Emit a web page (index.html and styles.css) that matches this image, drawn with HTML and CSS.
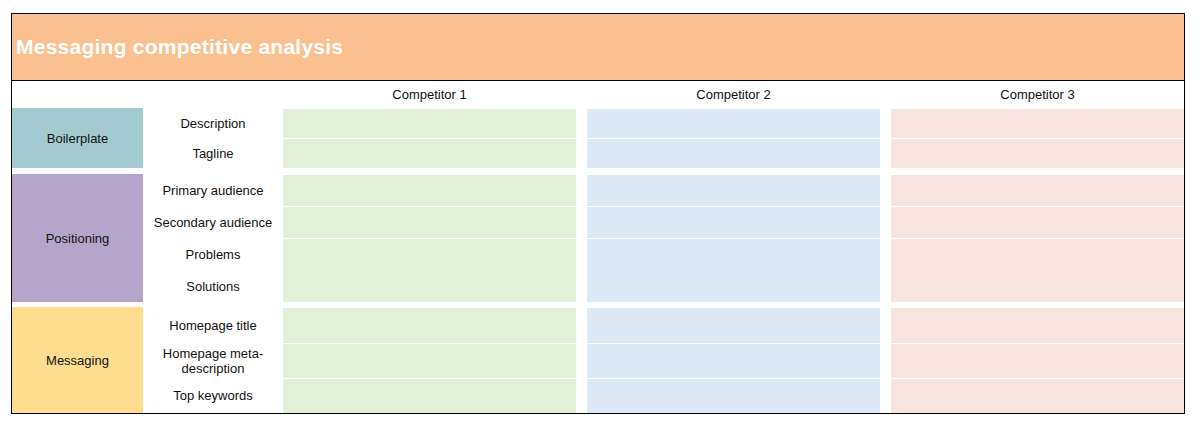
FILE: index.html
```html
<!DOCTYPE html>
<html lang="en">
<head>
<meta charset="utf-8">
<title>Messaging competitive analysis</title>
<link rel="stylesheet" href="styles.css">
</head>
<body>
<div class="sheet">
  <header class="title-bar">
    <h1 class="title">Messaging competitive analysis</h1>
  </header>

  <div class="row-grid col-heads">
    <div class="c1 head">Competitor 1</div>
    <div class="c2 head">Competitor 2</div>
    <div class="c3 head">Competitor 3</div>
  </div>

  <section class="row-grid group g-boiler">
    <div class="cat cat-boiler">Boilerplate</div>
    <div class="label">Description</div>
    <div class="c1 cell"></div><div class="c2 cell"></div><div class="c3 cell"></div>
    <div class="label">Tagline</div>
    <div class="c1 cell"></div><div class="c2 cell"></div><div class="c3 cell"></div>
  </section>

  <section class="row-grid group g-position">
    <div class="cat cat-position">Positioning</div>
    <div class="label">Primary audience</div>
    <div class="c1 cell"></div><div class="c2 cell"></div><div class="c3 cell"></div>
    <div class="label">Secondary audience</div>
    <div class="c1 cell"></div><div class="c2 cell"></div><div class="c3 cell"></div>
    <div class="label">Problems</div>
    <div class="c1 cell span2"></div><div class="c2 cell span2"></div><div class="c3 cell span2"></div>
    <div class="label">Solutions</div>
  </section>

  <section class="row-grid group g-message">
    <div class="cat cat-message">Messaging</div>
    <div class="label">Homepage title</div>
    <div class="c1 cell"></div><div class="c2 cell"></div><div class="c3 cell"></div>
    <div class="label">Homepage meta-description</div>
    <div class="c1 cell"></div><div class="c2 cell"></div><div class="c3 cell"></div>
    <div class="label">Top keywords</div>
    <div class="c1 cell"></div><div class="c2 cell"></div><div class="c3 cell"></div>
  </section>
</div>
</body>
</html>
```

FILE: styles.css
```css
* { box-sizing: border-box; }

html, body {
  margin: 0;
  padding: 0;
  background: #ffffff;
}

body {
  font-family: "Liberation Sans", Arial, sans-serif;
  font-size: 13px;
  color: #111111;
}

.sheet {
  margin: 13px 0 0 11px;
  width: 1174px;
  border: 1px solid #000000;
  background: #ffffff;
}

.title-bar {
  height: 67px;
  background: #fac08f;
  border-bottom: 1px solid #000000;
  display: flex;
  align-items: center;
  padding: 0 0 0 4px;
}

.title {
  margin: 0;
  font-size: 21px;
  font-weight: bold;
  letter-spacing: 0.25px;
  color: #ffffff;
}

.row-grid {
  display: grid;
  grid-template-columns: 131px 140px 293px 11px 293px 11px 293px;
}

.col-heads {
  height: 27px;
}

.head {
  display: flex;
  align-items: center;
  justify-content: center;
  padding-bottom: 1px;
}

.c1 { grid-column: 3; }
.c2 { grid-column: 5; }
.c3 { grid-column: 7; }

.g-boiler { grid-template-rows: 30px 30px; }
.g-position { grid-template-rows: 32px 32px 32px 32px; margin-top: 6px; }
.g-message { grid-template-rows: 36px 35px 35px; margin-top: 5px; }

.cat {
  grid-column: 1;
  grid-row: 1 / -1;
  display: flex;
  align-items: center;
  justify-content: center;
}

.cat-boiler { background: #a4cad1; }
.cat-position { background: #b6a5ca; }
.cat-message { background: #fede8e; }

.label {
  grid-column: 2;
  display: flex;
  align-items: center;
  justify-content: center;
  text-align: center;
  line-height: 15px;
  padding: 0 1px;
}

.cell { border-top: 1px solid #ffffff; }
.span2 { grid-row: span 2; }

.c1.cell { background: #e2f0d8; }
.c2.cell { background: #ddeaf6; }
.c3.cell { background: #f8e4de; }
```
